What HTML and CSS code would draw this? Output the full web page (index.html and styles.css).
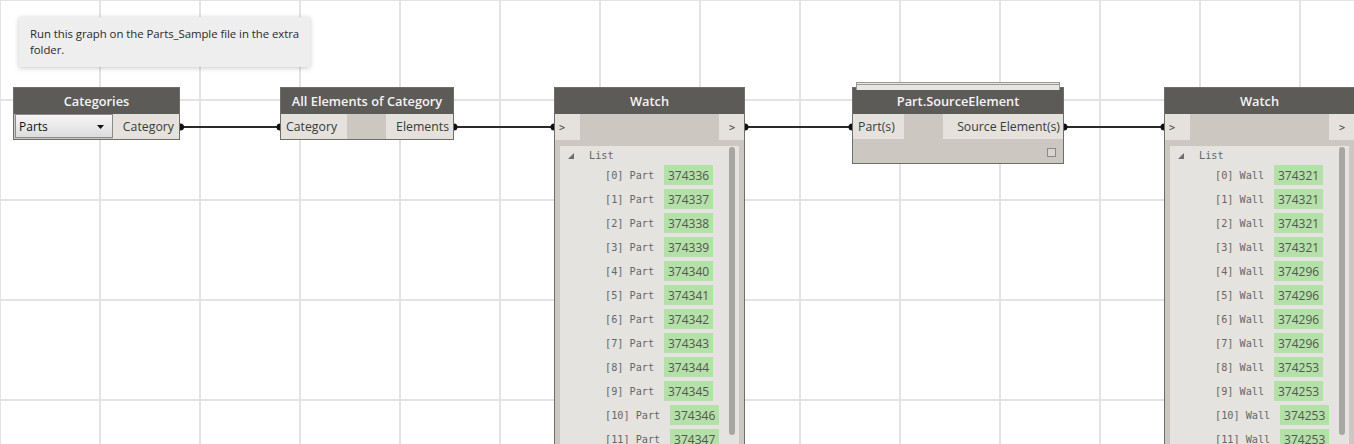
FILE: index.html
```html
<!DOCTYPE html>
<html>
<head>
<meta charset="utf-8">
<link rel="stylesheet" href="styles.css">
</head>
<body>
<div class="canvas">
  <svg class="wires" width="1354" height="444" viewBox="0 0 1354 444">
    <g stroke="#2a2a2a" stroke-width="2">
      <line x1="180" y1="127" x2="280" y2="127"/>
      <line x1="454" y1="127" x2="554" y2="127"/>
      <line x1="745" y1="127" x2="852" y2="127"/>
      <line x1="1064" y1="127" x2="1164" y2="127"/>
    </g>
    <g fill="#111">
      <circle cx="180.5" cy="127" r="3.5"/>
      <circle cx="280" cy="127" r="3.5"/>
      <circle cx="454" cy="127" r="3.5"/>
      <circle cx="554" cy="127" r="3.5"/>
      <circle cx="745" cy="127" r="3.5"/>
      <circle cx="852" cy="127" r="3.5"/>
      <circle cx="1064" cy="127" r="3.5"/>
      <circle cx="1164" cy="127" r="3.5"/>
    </g>
  </svg>

  <div class="note">Run this graph on the Parts_Sample file in the extra folder.</div>

  <div class="node n-categories">
    <div class="hdr">Categories</div>
    <div class="row">
      <div class="dropdown"><span>Parts</span><svg class="caret" width="7" height="4" viewBox="0 0 7 4"><polygon points="0,0 7,0 3.5,4" fill="#111"/></svg></div>
      <div class="port out">Category</div>
    </div>
  </div>

  <div class="node n-allel">
    <div class="hdr">All Elements of Category</div>
    <div class="row">
      <div class="port in">Category</div>
      <div class="port out">Elements</div>
    </div>
  </div>

  <div class="node watch w1">
    <div class="hdr">Watch</div>
    <div class="row">
      <div class="port in chev">&gt;</div>
      <div class="port out chev">&gt;</div>
    </div>
    <div class="panel">
      <div class="scroll"></div>
      <div class="listhead"><svg class="tri" width="6" height="6" viewBox="0 0 6 6"><polygon points="6,0 6,6 0,6" fill="#6d6d6d"/></svg><span>List</span></div>
      <div class="item"><span class="idx">[0] Part</span><span class="val">374336</span></div>
      <div class="item"><span class="idx">[1] Part</span><span class="val">374337</span></div>
      <div class="item"><span class="idx">[2] Part</span><span class="val">374338</span></div>
      <div class="item"><span class="idx">[3] Part</span><span class="val">374339</span></div>
      <div class="item"><span class="idx">[4] Part</span><span class="val">374340</span></div>
      <div class="item"><span class="idx">[5] Part</span><span class="val">374341</span></div>
      <div class="item"><span class="idx">[6] Part</span><span class="val">374342</span></div>
      <div class="item"><span class="idx">[7] Part</span><span class="val">374343</span></div>
      <div class="item"><span class="idx">[8] Part</span><span class="val">374344</span></div>
      <div class="item"><span class="idx">[9] Part</span><span class="val">374345</span></div>
      <div class="item"><span class="idx">[10] Part</span><span class="val">374346</span></div>
      <div class="item"><span class="idx">[11] Part</span><span class="val">374347</span></div>
    </div>
  </div>

  <div class="node n-source">
    <div class="stack s2"></div>
    <div class="stack s1"></div>
    <div class="hdr">Part.SourceElement</div>
    <div class="row">
      <div class="port in">Part(s)</div>
      <div class="port out">Source Element(s)</div>
    </div>
    <div class="foot"><span class="check"></span></div>
  </div>

  <div class="node watch w2">
    <div class="hdr">Watch</div>
    <div class="row">
      <div class="port in chev">&gt;</div>
      <div class="port out chev">&gt;</div>
    </div>
    <div class="panel">
      <div class="scroll"></div>
      <div class="listhead"><svg class="tri" width="6" height="6" viewBox="0 0 6 6"><polygon points="6,0 6,6 0,6" fill="#6d6d6d"/></svg><span>List</span></div>
      <div class="item"><span class="idx">[0] Wall</span><span class="val">374321</span></div>
      <div class="item"><span class="idx">[1] Wall</span><span class="val">374321</span></div>
      <div class="item"><span class="idx">[2] Wall</span><span class="val">374321</span></div>
      <div class="item"><span class="idx">[3] Wall</span><span class="val">374321</span></div>
      <div class="item"><span class="idx">[4] Wall</span><span class="val">374296</span></div>
      <div class="item"><span class="idx">[5] Wall</span><span class="val">374296</span></div>
      <div class="item"><span class="idx">[6] Wall</span><span class="val">374296</span></div>
      <div class="item"><span class="idx">[7] Wall</span><span class="val">374296</span></div>
      <div class="item"><span class="idx">[8] Wall</span><span class="val">374253</span></div>
      <div class="item"><span class="idx">[9] Wall</span><span class="val">374253</span></div>
      <div class="item"><span class="idx">[10] Wall</span><span class="val">374253</span></div>
      <div class="item"><span class="idx">[11] Wall</span><span class="val">374253</span></div>
    </div>
  </div>
</div>
</body>
</html>
```

FILE: styles.css
```css
* { box-sizing: border-box; }
html, body { margin: 0; padding: 0; }
body {
  width: 1354px;
  height: 444px;
  overflow: hidden;
  background: #fff;
  font-family: "Open Sans", "Noto Sans", sans-serif;
}
.canvas {
  position: relative;
  width: 1354px;
  height: 444px;
  overflow: hidden;
  background-color: #fff;
  background-image:
    linear-gradient(to right, #e3e3e3 2px, transparent 2px),
    linear-gradient(to bottom, #e3e3e3 2px, transparent 2px);
  background-size: 100px 100px;
  background-position: -1px -1px;
}
.wires { position: absolute; left: 0; top: 0; z-index: 1; }

.note {
  position: absolute;
  left: 19px;
  top: 17px;
  width: 291px;
  height: 50px;
  padding: 9px 3px 9px 11px;
  background: #eeeeee;
  box-shadow: 0 1px 5px rgba(0,0,0,0.22);
  font-size: 11.4px;
  line-height: 16px;
  letter-spacing: -0.05px;
  color: #2a2a2a;
  z-index: 2;
}

.node {
  position: absolute;
  top: 87px;
  z-index: 2;
  background: #ccc8c1;
  border: 1px solid #6f6d6a;
  display: flex;
  flex-direction: column;
}
.hdr {
  height: 26px;
  background: #5d5b58;
  color: #f4f4f4;
  font-weight: 600;
  font-size: 12.8px;
  display: flex;
  align-items: center;
  justify-content: center;
  flex: none;
}
.row {
  height: 25px;
  display: flex;
  justify-content: space-between;
  align-items: stretch;
  flex: none;
}
.port {
  background: #e5e2dd;
  color: #3a3a3a;
  font-size: 12.3px;
  display: flex;
  align-items: center;
  padding: 0 5px;
  white-space: nowrap;
}
.port.out { justify-content: flex-end; }

.n-categories { left: 13px; width: 167px; }
.n-categories .port.out { padding: 0 5px; width: 66px; }
.dropdown {
  width: 99px;
  margin: 0 0 1px 1px;
  border: 1px solid #8a8a8a;
  background: linear-gradient(to bottom, #f6f6f6, #dcdcdc);
  display: flex;
  align-items: center;
  justify-content: space-between;
  padding: 0 8px 0 3px;
  font-size: 12px;
  color: #111;
}
.caret { display: block; margin-top: 2px; }

.n-allel { left: 280px; width: 174px; }
.n-allel .port.in { width: 66px; }
.n-allel .port.out { width: 67px; padding-right: 4px; }

.watch { width: 191px; height: 380px; }
.w1 { left: 554px; }
.w2 { left: 1164px; }
.watch .row { height: 26px; }
.port.chev {
  width: 25px;
  padding: 0 4px;
  font-family: "DejaVu Sans Mono", monospace;
  font-size: 10px;
  color: #444;
}
.port.chev.out { justify-content: flex-start; padding-left: 10px; }
.panel {
  position: relative;
  margin: 6px 5px 0 5px;
  background: #e5e3df;
  flex: 1;
}
.scroll {
  position: absolute;
  right: 4px;
  top: 1px;
  width: 6px;
  height: 288px;
  border-radius: 3px;
  background: #a8a6a2;
}
.listhead {
  height: 19px;
  display: flex;
  align-items: center;
  padding-left: 8px;
  font-family: "DejaVu Sans Mono", monospace;
  font-size: 10.2px;
  color: #666;
}
.tri { display: block; margin-right: 15px; margin-top: 1px; }
.item {
  height: 20px;
  margin-bottom: 4px;
  display: flex;
  align-items: center;
  padding-left: 45px;
}
.idx {
  font-family: "DejaVu Sans Mono", monospace;
  font-size: 10.2px;
  color: #666;
  margin-right: 10px;
}
.val {
  height: 20px;
  width: 49px;
  background: #b3e1a7;
  color: #555;
  font-size: 12px;
  display: flex;
  align-items: center;
  justify-content: center;
}

.n-source { left: 852px; width: 212px; overflow: visible; }
.n-source .port.in { width: 51px; }
.n-source .port.out { width: 120px; padding-right: 3px; }
.stack {
  position: absolute;
  left: 3px;
  right: 3px;
  height: 6px;
  border: 1px solid #9a9894;
  border-bottom: none;
  background: #e8e6e2;
}
.stack.s1 { top: -4px; }
.stack.s2 { top: -6px; }
.foot {
  height: 24px;
  display: flex;
  justify-content: flex-end;
  align-items: center;
  padding-right: 7px;
}
.check {
  width: 9px;
  height: 9px;
  border: 1px solid #8c8a86;
  background: #d8d5cf;
  margin-top: 2px;
}
```
